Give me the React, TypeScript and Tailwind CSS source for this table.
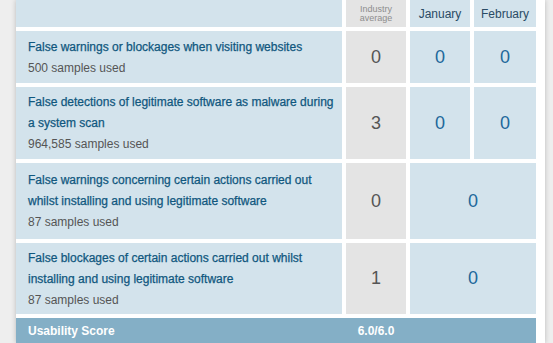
const rows = [
  {
    title: ["False warnings or blockages when visiting websites"],
    samples: "500 samples used",
    industry: "0",
    jan: "0",
    feb: "0",
    h: "h-[52px]",
  },
  {
    title: [
      "False detections of legitimate software as malware during",
      "a system scan",
    ],
    samples: "964,585 samples used",
    industry: "3",
    jan: "0",
    feb: "0",
    h: "h-[72px]",
  },
  {
    title: [
      "False warnings concerning certain actions carried out",
      "whilst installing and using legitimate software",
    ],
    samples: "87 samples used",
    industry: "0",
    merged: "0",
    h: "h-[76px]",
  },
  {
    title: [
      "False blockages of certain actions carried out whilst",
      "installing and using legitimate software",
    ],
    samples: "87 samples used",
    industry: "1",
    merged: "0",
    h: "h-[71px]",
  },
];

const App = () => {
  return (
    <div className="h-[343px] w-[553px] overflow-hidden bg-[#eeeeee] font-['Liberation_Sans',Arial,sans-serif]">
      <div className="ml-[16px] h-full w-[529px] bg-white shadow-[0_0_5px_rgba(0,0,0,0.22)]">
        <div className="grid w-[520px] grid-cols-[326px_60px_60px_62px] gap-[4px]">
          {/* header */}
          <div className="h-[27px] bg-[#d3e3ec]" />
          <div className="flex h-[27px] flex-col items-center justify-center bg-[#e4e4e4] text-[9px] leading-[9px] text-[#8e8e8e]">
            <span>Industry</span>
            <span>average</span>
          </div>
          <div className="flex h-[27px] items-center justify-center bg-[#d3e3ec] text-[12px] text-[#2a4b64]">
            January
          </div>
          <div className="flex h-[27px] items-center justify-center bg-[#d3e3ec] text-[12px] text-[#2a4b64]">
            February
          </div>

          {rows.map((r, i) => (
            <Row key={i} row={r} />
          ))}

          {/* footer */}
          <div className="col-span-4 grid h-[25px] grid-cols-[326px_60px_134px] gap-[4px] bg-[#84afc6] text-[12px] font-bold text-white">
            <div className="flex items-center pl-[12px]">Usability Score</div>
            <div className="flex items-center justify-center">6.0/6.0</div>
            <div />
          </div>
        </div>
      </div>
    </div>
  );
};
export default App;

const Row = ({ row }: { row: (typeof rows)[number] }) => {
  return (
    <>
      <div
        className={`flex flex-col justify-center bg-[#d3e3ec] pl-[12px] ${row.h}`}
      >
        <div className="text-[12px] leading-[21px] text-[#10577e] [-webkit-text-stroke:0.25px_#10577e]">
          {row.title.map((t, j) => (
            <div key={j}>{t}</div>
          ))}
        </div>
        <div className="text-[12px] leading-[20px] text-[#555555]">
          {row.samples}
        </div>
      </div>
      <div
        className={`flex items-center justify-center bg-[#e4e4e4] text-[18px] text-[#555555] ${row.h}`}
      >
        {row.industry}
      </div>
      {row.merged ? (
        <div
          className={`col-span-2 flex items-center justify-center bg-[#d3e3ec] text-[18px] text-[#21689b] ${row.h}`}
        >
          {row.merged}
        </div>
      ) : (
        <>
          <div
            className={`flex items-center justify-center bg-[#d3e3ec] text-[18px] text-[#21689b] ${row.h}`}
          >
            {row.jan}
          </div>
          <div
            className={`flex items-center justify-center bg-[#d3e3ec] text-[18px] text-[#21689b] ${row.h}`}
          >
            {row.feb}
          </div>
        </>
      )}
    </>
  );
};
